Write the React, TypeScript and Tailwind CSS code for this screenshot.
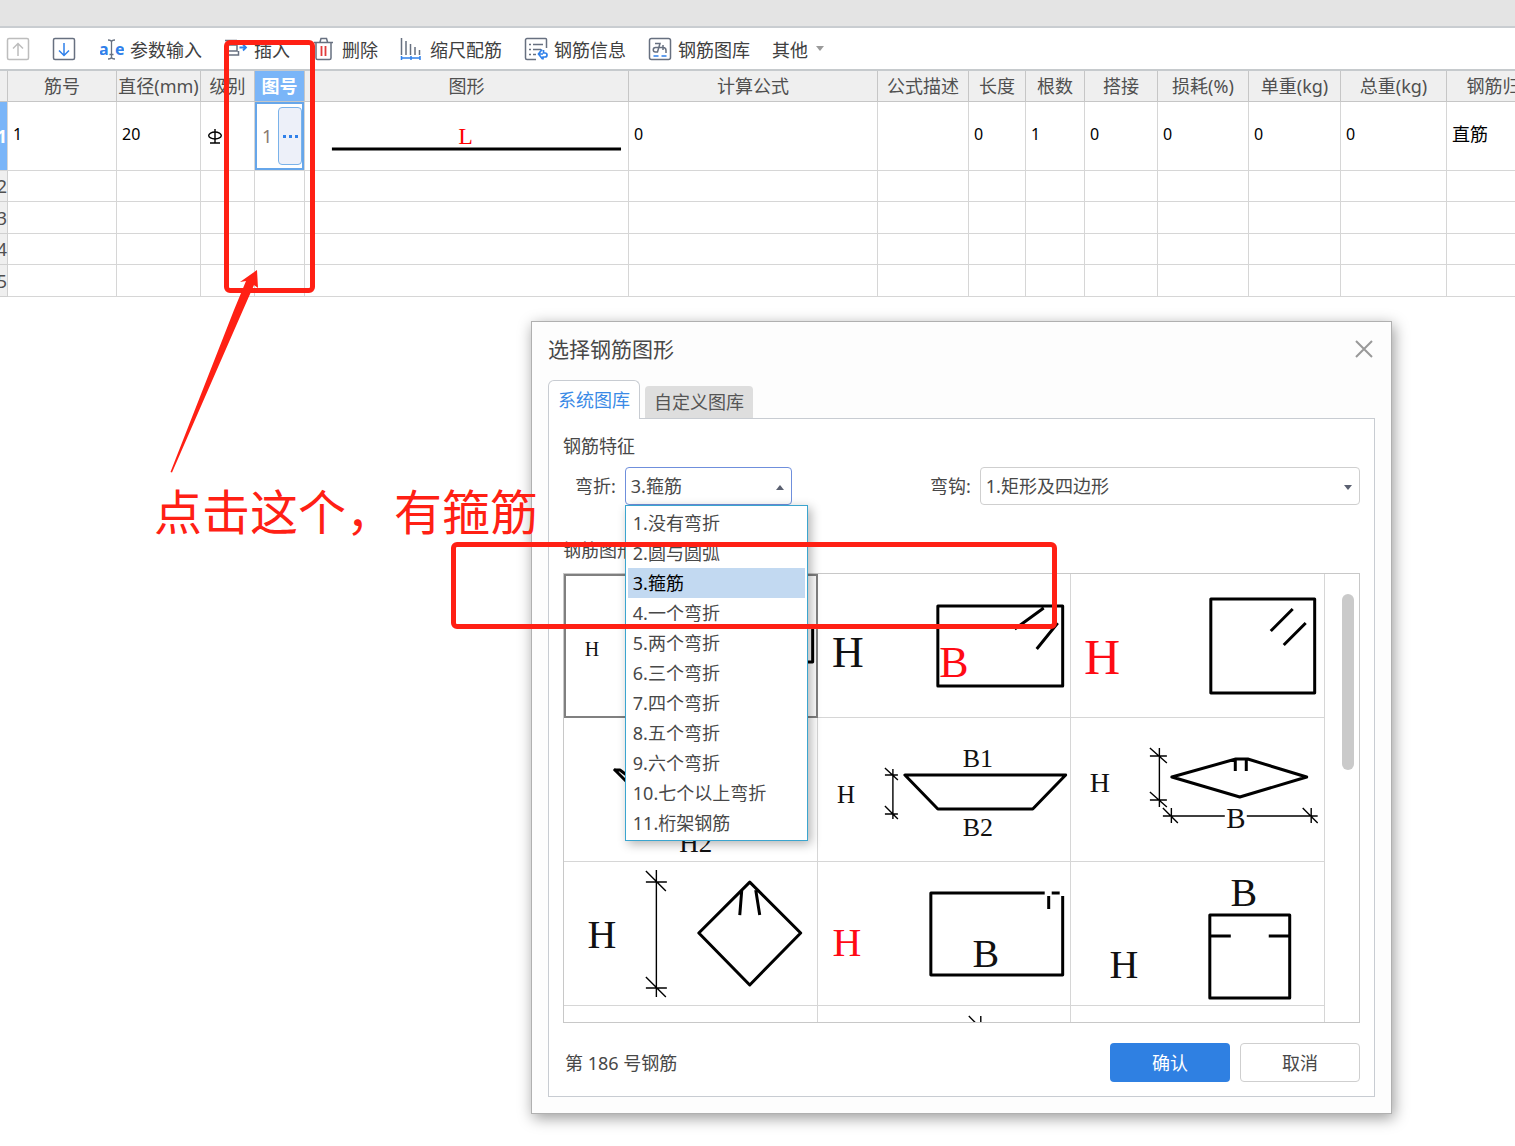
import { useState } from "react";
import type { ReactNode } from "react";
import clsx from "clsx";

const columns = [
  { title: "筋号", width: "w-[109px]", value: "1" },
  { title: "直径(mm)", width: "w-[84px]", value: "20" },
  { title: "级别", width: "w-[54px]", value: "" },
  { title: "图号", width: "w-[50px]", value: "1" },
  { title: "图形", width: "w-[324px]", value: "" },
  { title: "计算公式", width: "w-[249px]", value: "0" },
  { title: "公式描述", width: "w-[91px]", value: "" },
  { title: "长度", width: "w-[57px]", value: "0" },
  { title: "根数", width: "w-[59px]", value: "1" },
  { title: "搭接", width: "w-[73px]", value: "0" },
  { title: "损耗(%)", width: "w-[91px]", value: "0" },
  { title: "单重(kg)", width: "w-[92px]", value: "0" },
  { title: "总重(kg)", width: "w-[106px]", value: "0" },
  { title: "钢筋归类", width: "w-auto", value: "直筋" },
];

const bends = [
  "1.没有弯折",
  "2.圆与圆弧",
  "3.箍筋",
  "4.一个弯折",
  "5.两个弯折",
  "6.三个弯折",
  "7.四个弯折",
  "8.五个弯折",
  "9.六个弯折",
  "10.七个以上弯折",
  "11.桁架钢筋",
];

function Icon({ children }: { children: ReactNode }) {
  return (
    <svg
      viewBox="0 0 24 24"
      className="size-6 shrink-0"
      fill="none"
      stroke="#677080"
      strokeWidth="1.5"
    >
      {children}
    </svg>
  );
}

function ToolButton({ icon, label }: { icon: ReactNode; label: string }) {
  return (
    <button type="button" className="flex items-center gap-1.5 whitespace-nowrap">
      {icon}
      <span className="pt-0.5">{label}</span>
    </button>
  );
}

function Toolbar() {
  return (
    <div className="flex h-[43px] items-center gap-[22px] border-b-2 border-[#c6cacd] pl-1.5 text-[18px] leading-6 text-[#404040]">
      <div className="flex gap-[22px] pr-0.5">
        <button type="button" aria-label="上移">
          <Icon>
            <g stroke="#bdbdbd">
              <rect x="1.5" y="1.5" width="21" height="21" rx="1.5" />
              <path d="M12 19V7M7 11.5 12 6.500l5 5" />
            </g>
          </Icon>
        </button>
        <button type="button" aria-label="下移">
          <Icon>
            <rect x="1.500" y="1.500" width="21" height="21" rx="1.500" />
            <path stroke="#2f80ea" d="M12 6v12M7 13.500l5 5 5-5" />
          </Icon>
        </button>
      </div>
      <ToolButton
        label="参数输入"
        icon={
          <Icon>
            <g
              fill="#2f80ea"
              stroke="none"
              fontFamily="Noto Sans"
              fontWeight="700"
              fontSize="16"
            >
              <text x="-1" y="18">a</text>
              <text x="15" y="18">e</text>
            </g>
            <path
              strokeWidth="1.3"
              d="M8 3c2 0 3.500.5 3.500 2 0-1.500 1.500-2 3.500-2M11.500 5v15M8 22c2 0 3.500-.5 3.500-2 0 1.500 1.500 2 3.500 2M9.500 17.500h4"
            />
          </Icon>
        }
      />
      <ToolButton
        label="插入"
        icon={
          <Icon>
            <path d="M1 3.500h12M4.500 8h8.500v6H4.500M1 18h13.500v-4" />
            <path stroke="#2f80ea" strokeWidth="1.800" d="M15.500 10.500h6M19 7.500l3 3-3 3" />
          </Icon>
        }
      />
      <ToolButton
        label="删除"
        icon={
          <Icon>
            <path d="M2 5.500h19M8 5l1-3.500h5.500l1 3.500M4 5.500V21a1.500 1.500 0 0 0 1.500 1.500h12A1.500 1.500 0 0 0 19 21V5.500" />
            <path stroke="#e23b3b" strokeWidth="1.800" d="M9.500 9v10M13.500 9v10" />
          </Icon>
        }
      />
      <ToolButton
        label="缩尺配筋"
        icon={
          <Icon>
            <path d="M1.500 1v17M6 4v14M10.500 7v11M15 10v8M19.500 13v5" />
            <path stroke="#2f80ea" d="M1 21h19.500M1.500 19v4M11 19v4M20 19v4" />
          </Icon>
        }
      />
      <ToolButton
        label="钢筋信息"
        icon={
          <Icon>
            <path d="M12 22.500H3A1.500 1.500 0 0 1 1.500 21V3A1.500 1.500 0 0 1 3 1.500h18.500a1 1 0 0 1 1 1V11" />
            <path d="M5 7.500h2M9 7.500h10M5 12.500h2M9 12.500h8M5 17.500h2M9 17.500h3" />
            <path
              stroke="#2f80ea"
              strokeWidth="1.700"
              d="M18 12.500l-3.500 4.500 4 5M19.500 13v3h1.500a2 2 0 0 1 0 4h-2v2.500M15 17h4"
            />
          </Icon>
        }
      />
      <ToolButton
        label="钢筋图库"
        icon={
          <Icon>
            <rect x="1.500" y="1.500" width="21" height="21" rx="2" />
            <path d="M7 6.500h5l-2.500 8.500H7.500a2.200 2.200 0 0 1 0-4.500H15a3 3 0 0 1 3 3V16M15 8v5" />
            <path stroke="#2f80ea" d="M5.500 19h5M13.500 19h5" />
          </Icon>
        }
      />
      <button type="button" className="flex items-center gap-2">
        <span className="pt-0.5">其他</span>
        <svg viewBox="0 0 8 5" className="h-[5px] w-2" fill="#9a9a9a">
          <path d="M0 0h8L4 5z" />
        </svg>
      </button>
    </div>
  );
}

function FirstRowCell({ title, value }: { title: string; value: string }) {
  if (title === "级别") {
    return (
      <svg
        viewBox="0 0 16 18"
        className="ml-1.5 h-[18px] w-4"
        fill="none"
        stroke="#000"
        strokeWidth="1.400"
      >
        <ellipse cx="8" cy="8.500" rx="6.300" ry="3.500" />
        <path d="M8 2v14.500M3 16h10" />
      </svg>
    );
  }
  if (title === "图号") {
    return (
      <div className="flex h-[68px] items-center justify-between border-[2px] border-[#66a6ea] pl-[5px] text-[18px] text-[#8a7a70]">
        {value}
        <button
          type="button"
          aria-label="选择图号"
          className="flex h-[58px] w-6 items-center justify-center gap-[3px] rounded border border-[#7ab2ea] bg-[#edf0f9]"
        >
          <i className="size-[3px] bg-[#2f80ea]" />
          <i className="size-[3px] bg-[#2f80ea]" />
          <i className="size-[3px] bg-[#2f80ea]" />
        </button>
      </div>
    );
  }
  if (title === "图形") {
    return (
      <svg viewBox="0 0 324 68" className="h-[68px] w-full">
        <text
          x="161"
          y="42"
          fontSize="24"
          fill="#f00"
          textAnchor="middle"
          className="font-['Liberation_Serif',serif]"
        >
          L
        </text>
        <path d="M27 47h290" stroke="#000" strokeWidth="3" />
      </svg>
    );
  }
  return <div className="pb-1 pl-[5px]">{value}</div>;
}

function RebarTable() {
  return (
    <div className="overflow-hidden">
      <table className="-ml-6 w-[calc(100%+68px)] table-fixed border-separate border-spacing-0">
        <thead>
          <tr className="h-[31px] bg-[#efefef] text-[18px] leading-6 text-[#505050]">
            <th className="w-8 border-r border-b border-[#c6c6c6]" />
            {columns.map(({ title, width }) => (
              <th
                key={title}
                className={clsx(
                  "border-r border-b border-[#c6c6c6] p-0 whitespace-nowrap",
                  width,
                  title === "图号"
                    ? "bg-[#7ab5f8] font-bold text-white"
                    : "font-normal"
                )}
              >
                {title}
              </th>
            ))}
          </tr>
        </thead>
        <tbody>
          <tr className="h-[69px] text-[16px] leading-6 text-black">
            <th className="border-r border-b border-[#d6d6d6] bg-[#7ab5f8] p-0 text-right text-[18px] text-white">
              1
            </th>
            {columns.map(({ title, value }) => (
              <td
                key={title}
                className={clsx(
                  "border-r border-b border-[#d6d6d6] p-0 align-middle",
                  title === "钢筋归类" && "text-[18px]"
                )}
              >
                <FirstRowCell title={title} value={value} />
              </td>
            ))}
          </tr>
          {[2, 3, 4, 5].map((row) => (
            <tr key={row} className="h-8 even:h-[31px]">
              <th className="border-r border-b border-[#d0d0d0] bg-[#efefef] p-0 text-right text-[18px] leading-6 font-normal text-[#505050]">
                {row}
              </th>
              {columns.map(({ title }) => (
                <td
                  key={title}
                  className="border-r border-b border-[#d6d6d6] p-0"
                />
              ))}
            </tr>
          ))}
        </tbody>
      </table>
    </div>
  );
}

type LabelProps = { x: number; y: number; size: number; red?: boolean; children: string };

function Label({ x, y, size, red, children }: LabelProps) {
  return (
    <text
      x={x}
      y={y}
      fontSize={size}
      textAnchor="middle"
      stroke="none"
      fill={red ? "#ff0a14" : "#111"}
    >
      {children}
    </text>
  );
}

const shapes: ReactNode[] = [
  <>
    <Label x={28} y={82} size={20}>H</Label>
    <path d="M130 53h119v35H130z" />
  </>,
  <>
    <Label x={30} y={93} size={44}>H</Label>
    <Label x={136} y={103} size={44} red>B</Label>
    <path d="M120 32h125v80H120zM197 55l29-21M240 49l-21 26" />
  </>,
  <>
    <Label x={31} y={100} size={50} red>H</Label>
    <path d="M140 25h104v94H140zM200 57l22-22M213 71l22-22" />
  </>,
  <>
    <path d="M50 51l14 14M50 52h6l8 6" />
    <Label x={132} y={134} size={27}>H2</Label>
  </>,
  <>
    <Label x={28} y={85} size={25}>H</Label>
    <Label x={160} y={49} size={26}>B1</Label>
    <Label x={160} y={118} size={26}>B2</Label>
    <path d="M87 57h161l-33 34h-95z" />
    <path strokeWidth="1.400" d="M75 51v50M67 57h13M67 96h13M67 50l13 12M67 88l13 13" />
  </>,
  <>
    <Label x={29} y={74} size={28}>H</Label>
    <Label x={165} y={110} size={29}>B</Label>
    <path d="M101 59l64-18h12l59 18-67 20zM164.500 41v12M175.500 41v12" />
    <path
      strokeWidth="1.400"
      d="M88.500 30v59M79 38h17M79 82h17M79 30l17 15M79 74l17 15M92 98h62M176 98h71M100.500 90v15M240.500 90v15M92 90l15 15M232 90l15 15"
    />
  </>,
  <>
    <Label x={38} y={86} size={40}>H</Label>
    <path d="M186 20l51 51-51 52-51-52zM178 28l-2 25M192 28l4 25" />
    <path
      strokeWidth="1.400"
      d="M92.500 8v127M82 20h21M82 126h21M82 9l20 20M82 115l20 20"
    />
  </>,
  <>
    <Label x={29} y={94} size={40} red>H</Label>
    <Label x={168} y={105} size={40}>B</Label>
    <path d="M227 31H113v82h132V34M234 31h8M231 34v13" />
  </>,
  <>
    <Label x={173} y={44} size={40}>B</Label>
    <Label x={53} y={116} size={40}>H</Label>
    <path d="M139 53h80v83h-80zM139 74h21M198 74h21" />
  </>,
  null,
  <path key="dim" strokeWidth="1.400" d="M151 10l14 14M163 10v20" />,
  null,
];

function ShapeGallery() {
  const [selected, setSelected] = useState(0);

  return (
    <div className="mt-2.5 flex h-[450px] overflow-hidden border border-[#c8c8c8]">
      <div className="grid flex-1 auto-rows-[144px] grid-cols-3">
        {shapes.map((shape, index) => (
          <button
            key={index}
            type="button"
            aria-label={`图形 ${index + 1}`}
            aria-pressed={selected === index}
            onClick={() => setSelected(index)}
            className={clsx(
              "border-r border-b border-[#d6d6d6]",
              selected === index && "outline-2 -outline-offset-2 outline-[#808080]"
            )}
          >
            <svg
              viewBox="0 0 253 143"
              className="h-[143px] w-full font-['Liberation_Serif',serif]"
              fill="none"
              stroke="#000"
              strokeWidth="3"
              strokeLinejoin="round"
            >
              {shape}
            </svg>
          </button>
        ))}
      </div>
      <div className="w-[34px] pt-5 pl-[17px]">
        <div className="h-44 w-3 rounded-full bg-[#cacaca]" />
      </div>
    </div>
  );
}

function BendSelect() {
  const [bend, setBend] = useState("3.箍筋");
  const [open, setOpen] = useState(true);

  return (
    <div className="flex items-center gap-[9px] pl-3">
      <label htmlFor="bend">弯折:</label>
      <div className="relative">
        <select
          id="bend"
          value={bend}
          onChange={(e) => setBend(e.target.value)}
          onMouseDown={(e) => {
            e.preventDefault();
            setOpen(!open);
          }}
          className="h-[38px] w-[167px] appearance-none rounded border border-[#6f8fdc] bg-white pl-[5px]"
        >
          {bends.map((item) => (
            <option key={item}>{item}</option>
          ))}
        </select>
        <svg
          viewBox="0 0 8 5"
          className="pointer-events-none absolute top-[18px] right-2 h-[5px] w-2"
          fill="#5a6070"
        >
          <path d="M0 5h8L4 0z" />
        </svg>
        {open && (
          <ul
            role="listbox"
            className="absolute top-full left-0 z-10 w-[183px] border border-[#3ba5cf] bg-white p-0.5 shadow-[3px_3px_10px_rgba(0,0,0,0.3)]"
          >
            {bends.map((item) => (
              <li
                key={item}
                role="option"
                aria-selected={item === bend}
                onClick={() => {
                  setBend(item);
                  setOpen(false);
                }}
                className={clsx(
                  "h-[30px] pl-[5px] leading-[30px] whitespace-nowrap",
                  item === bend && "bg-[#c2d9f1] text-black"
                )}
              >
                {item}
              </li>
            ))}
          </ul>
        )}
      </div>
    </div>
  );
}

function ShapeDialog() {
  return (
    <section
      role="dialog"
      aria-labelledby="dialog-title"
      className="absolute top-[321px] left-[531px] w-[861px] border border-[#b0b0b0] bg-[#fdfdfd] px-4 pb-4 text-[18px] leading-[26px] text-[#484848] shadow-[2px_4px_14px_rgba(0,0,0,0.4)]"
    >
      <header className="flex h-[58px] items-center justify-between pb-1">
        <h2 id="dialog-title" className="text-[21px]">
          选择钢筋图形
        </h2>
        <button type="button" aria-label="关闭" className="pr-0.5">
          <svg viewBox="0 0 18 18" className="size-[18px]" stroke="#999" strokeWidth="2">
            <path d="M1 1l16 16M17 1 1 17" />
          </svg>
        </button>
      </header>

      <div role="tablist" className="flex h-[38px] items-end gap-[5px]">
        <button
          type="button"
          role="tab"
          aria-selected
          className="z-[1] -mb-px h-[39px] rounded-t-md border border-b-0 border-[#c8ccd2] bg-white px-[9px] text-[#3a8ae6]"
        >
          系统图库
        </button>
        <button
          type="button"
          role="tab"
          aria-selected={false}
          className="h-8 rounded-t bg-[#dedede] px-[9px] text-[#555]"
        >
          自定义图库
        </button>
      </div>

      <div className="border border-[#c8ccd2] bg-white p-3.5">
        <h3>钢筋特征</h3>
        <div className="mt-2 flex justify-between">
          <BendSelect />
          <div className="flex w-[430px] items-center gap-[9px]">
            <label htmlFor="hook">弯钩:</label>
            <div className="relative flex-1">
              <select
                id="hook"
                className="h-[38px] w-full appearance-none rounded border border-[#cfcfcf] bg-white pl-[5px]"
              >
                <option>1.矩形及四边形</option>
              </select>
              <svg
                viewBox="0 0 8 5"
                className="pointer-events-none absolute top-[18px] right-2 h-[5px] w-2"
                fill="#5a6070"
              >
                <path d="M0 0h8L4 5z" />
              </svg>
            </div>
          </div>
        </div>

        <h3 className="mt-8">钢筋图形</h3>
        <ShapeGallery />

        <footer className="mt-5 flex items-center gap-2.5">
          <p className="mr-auto pl-0.5">第 186 号钢筋</p>
          <button
            type="button"
            className="h-[39px] w-[120px] rounded bg-[#2f80e2] text-white"
          >
            确认
          </button>
          <button
            type="button"
            className="h-[39px] w-[120px] rounded border border-[#cfcfcf] bg-white"
          >
            取消
          </button>
        </footer>
      </div>
    </section>
  );
}

// Red marks laid over the window
function Annotations() {
  return (
    <div className="pointer-events-none absolute inset-0 z-20">
      <div className="absolute top-10 left-[224px] h-[253px] w-[91px] rounded-md border-[5px] border-[#ff2014]" />
      <div className="absolute top-[542px] left-[451px] h-[87px] w-[606px] rounded-md border-[5px] border-[#ff2014]" />
      <svg
        viewBox="0 0 90 204"
        className="absolute top-[270px] left-[170px] h-[204px] w-[90px]"
        fill="#ff2014"
      >
        <path d="M87 0 70 12l6-1L64 40 .5 202l1.500.5L73 40l11-25 4 3z" />
      </svg>
      <p className="absolute top-[484px] left-[154px] text-[48px] leading-[56px] whitespace-nowrap text-[#ff2014]">
        点击这个，有箍筋
      </p>
    </div>
  );
}

export default function App() {
  return (
    <main className="relative min-h-screen overflow-hidden bg-white font-['Noto_Sans','Noto_Sans_CJK_SC',sans-serif]">
      <div className="h-7 border-b-2 border-[#c9cdd1] bg-[#e4e4e4]" />
      <Toolbar />
      <RebarTable />
      <ShapeDialog />
      <Annotations />
    </main>
  );
}
